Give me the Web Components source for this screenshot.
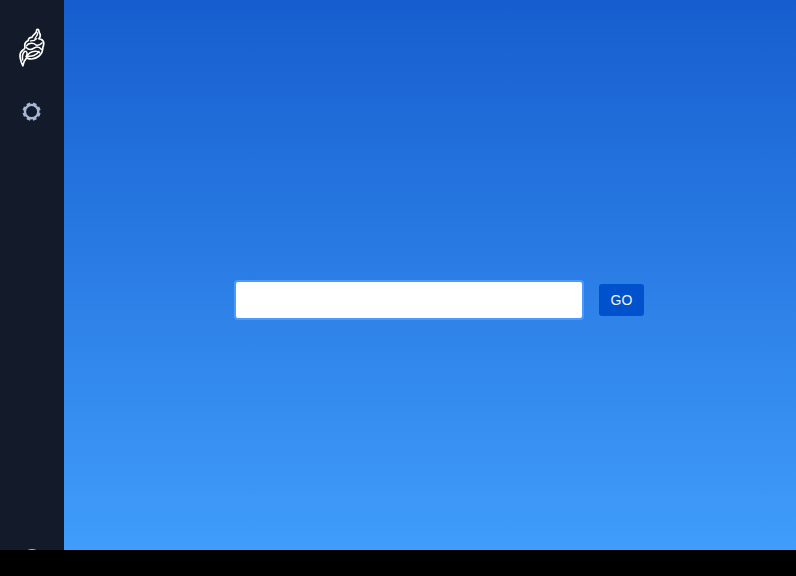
<!DOCTYPE html>
<html lang="en">
<head>
<meta charset="utf-8">
<title>Start</title>
<style>
html,body{margin:0;height:100%;background:#000;overflow:hidden}
body{font-family:"Liberation Sans",Arial,sans-serif;font-size:14px}
</style>
</head>
<body>
<app-shell>
  <side-nav slot="nav"><brand-logo></brand-logo><gear-icon></gear-icon><help-icon slot="footer"></help-icon></side-nav>
  <search-form><text-field></text-field><action-button>GO</action-button></search-form>
</app-shell>
<script>
function define(name, markup) {
  const template = document.createElement('template');
  template.innerHTML = markup;
  customElements.define(name, class extends HTMLElement {
    constructor() {
      super();
      this.attachShadow({mode: 'open'}).append(template.content.cloneNode(true));
    }
  });
}
define('app-shell', `<style>
:host{display:flex;width:100%;height:550px;overflow:hidden}
main{flex:1;display:flex;background:linear-gradient(180deg,#165ecf 0%,#409dfb 100%)}
</style><slot name="nav"></slot><main><slot></slot></main>`);
define('side-nav', `<style>
:host{display:flex;flex-direction:column;justify-content:space-between;align-items:center;box-sizing:border-box;width:64px;height:572px;padding-top:28px;background:#131a29;flex:none}
div{display:flex;flex-direction:column;align-items:center;gap:32px}
</style><div><slot></slot></div><slot name="footer"></slot>`);
define('brand-logo', `<style>:host{display:block;width:28px;height:40px}svg{display:block}</style>
<svg width="28" height="40" viewBox="0 0 28 40" fill="none" stroke="#fff" stroke-linejoin="round" stroke-linecap="round">
<path stroke-width="1.700" d="M18.600 1.900C19.400 5.600 14.700 6 14 9.400C11.800 9.200 10.200 10.500 10.300 12.500C7.700 13.600 6.400 16.100 6.900 18.600C7.200 20.500 6.500 21.200 5 22C2.300 23.700 1.600 27 2.300 30.300C2.800 33.300 3.700 35.500 4.900 37.800C5.500 34.800 6.700 31.800 8.600 29.900C12.500 31.600 17.500 31 21 28C24 25.500 24.800 22.500 24.800 19.500C26.200 16 25.800 12.500 22.900 11.300L20.800 10.700C22.500 8.800 22.700 6.800 21.500 4.900C20.900 3.900 20.800 2.900 20.600 1.900C20.200 1.200 19.100 1.200 18.600 1.900Z"/>
<path stroke-width="1.200" d="M19.700 4.500C20.300 7.600 17.300 8.400 16.800 11.200M12.400 12.900C15.300 13 17.400 12.200 18.800 10.600"/>
<path stroke-width="1.500" d="M8.500 17.800C10.500 14.800 15.500 14.500 18 17C20.200 17.500 22 17.100 23.900 15M8.200 19.500C10.500 22 13.600 21.700 16.200 20C18.700 18.500 21.500 18.900 23.300 21.300"/>
<path stroke-width="1.500" d="M6.600 23.400C4.700 25.300 4 28.200 4.600 32M8.600 29C10 25.700 13 23.500 17.200 23.300C19.500 23.200 20.600 23.600 21.500 24.600M9.600 28C13.500 28.800 18.600 27.500 21 23.300M7.700 23.200C9.400 24.200 9.500 26.300 8 28.700"/>
</svg>`);
define('gear-icon', `<style>:host{display:block;width:24px;height:24px}svg{display:block}</style>
<svg width="24" height="24" viewBox="0 0 24 24" fill="none" stroke="#a7b8d6"><circle cx="11.600" cy="11.600" r="6.650" stroke-width="2.300"/>
<g stroke-width="3.800"><path d="M11.600 5V2.600" transform="rotate(22.500 11.600 11.600)"/><path d="M11.600 5V2.600" transform="rotate(67.500 11.600 11.600)"/><path d="M11.600 5V2.600" transform="rotate(112.500 11.600 11.600)"/><path d="M11.600 5V2.600" transform="rotate(157.500 11.600 11.600)"/><path d="M11.600 5V2.600" transform="rotate(202.500 11.600 11.600)"/><path d="M11.600 5V2.600" transform="rotate(247.500 11.600 11.600)"/><path d="M11.600 5V2.600" transform="rotate(292.500 11.600 11.600)"/><path d="M11.600 5V2.600" transform="rotate(337.500 11.600 11.600)"/></g></svg>`);
define('help-icon', `<style>:host{display:block;width:24px;height:25px}svg{display:block}</style>
<svg width="24" height="24" viewBox="0 0 24 24"><circle cx="12" cy="12" r="10" fill="#a7b8d6"/></svg>`);
define('search-form', `<style>:host{display:flex;align-items:center;gap:15px;height:40px;padding:280px 0 0 170px}</style><slot></slot>`);
define('text-field', `<style>:host{display:block;width:350px;height:40px}
input{display:block;box-sizing:border-box;width:100%;height:100%;margin:0;padding:8px 6px;border:2px solid #4c9aff;border-radius:4px;background:#fff;outline:0;font:inherit}</style><input aria-label="Search">`);
define('action-button', `<style>:host{display:block}
button{display:block;box-sizing:border-box;width:45px;height:32px;padding:0;border:0;border-radius:3px;background:#0052cc;color:#f4f5f7;font:inherit;line-height:32px}</style><button><slot></slot></button>`);
</script>
</body>
</html>
